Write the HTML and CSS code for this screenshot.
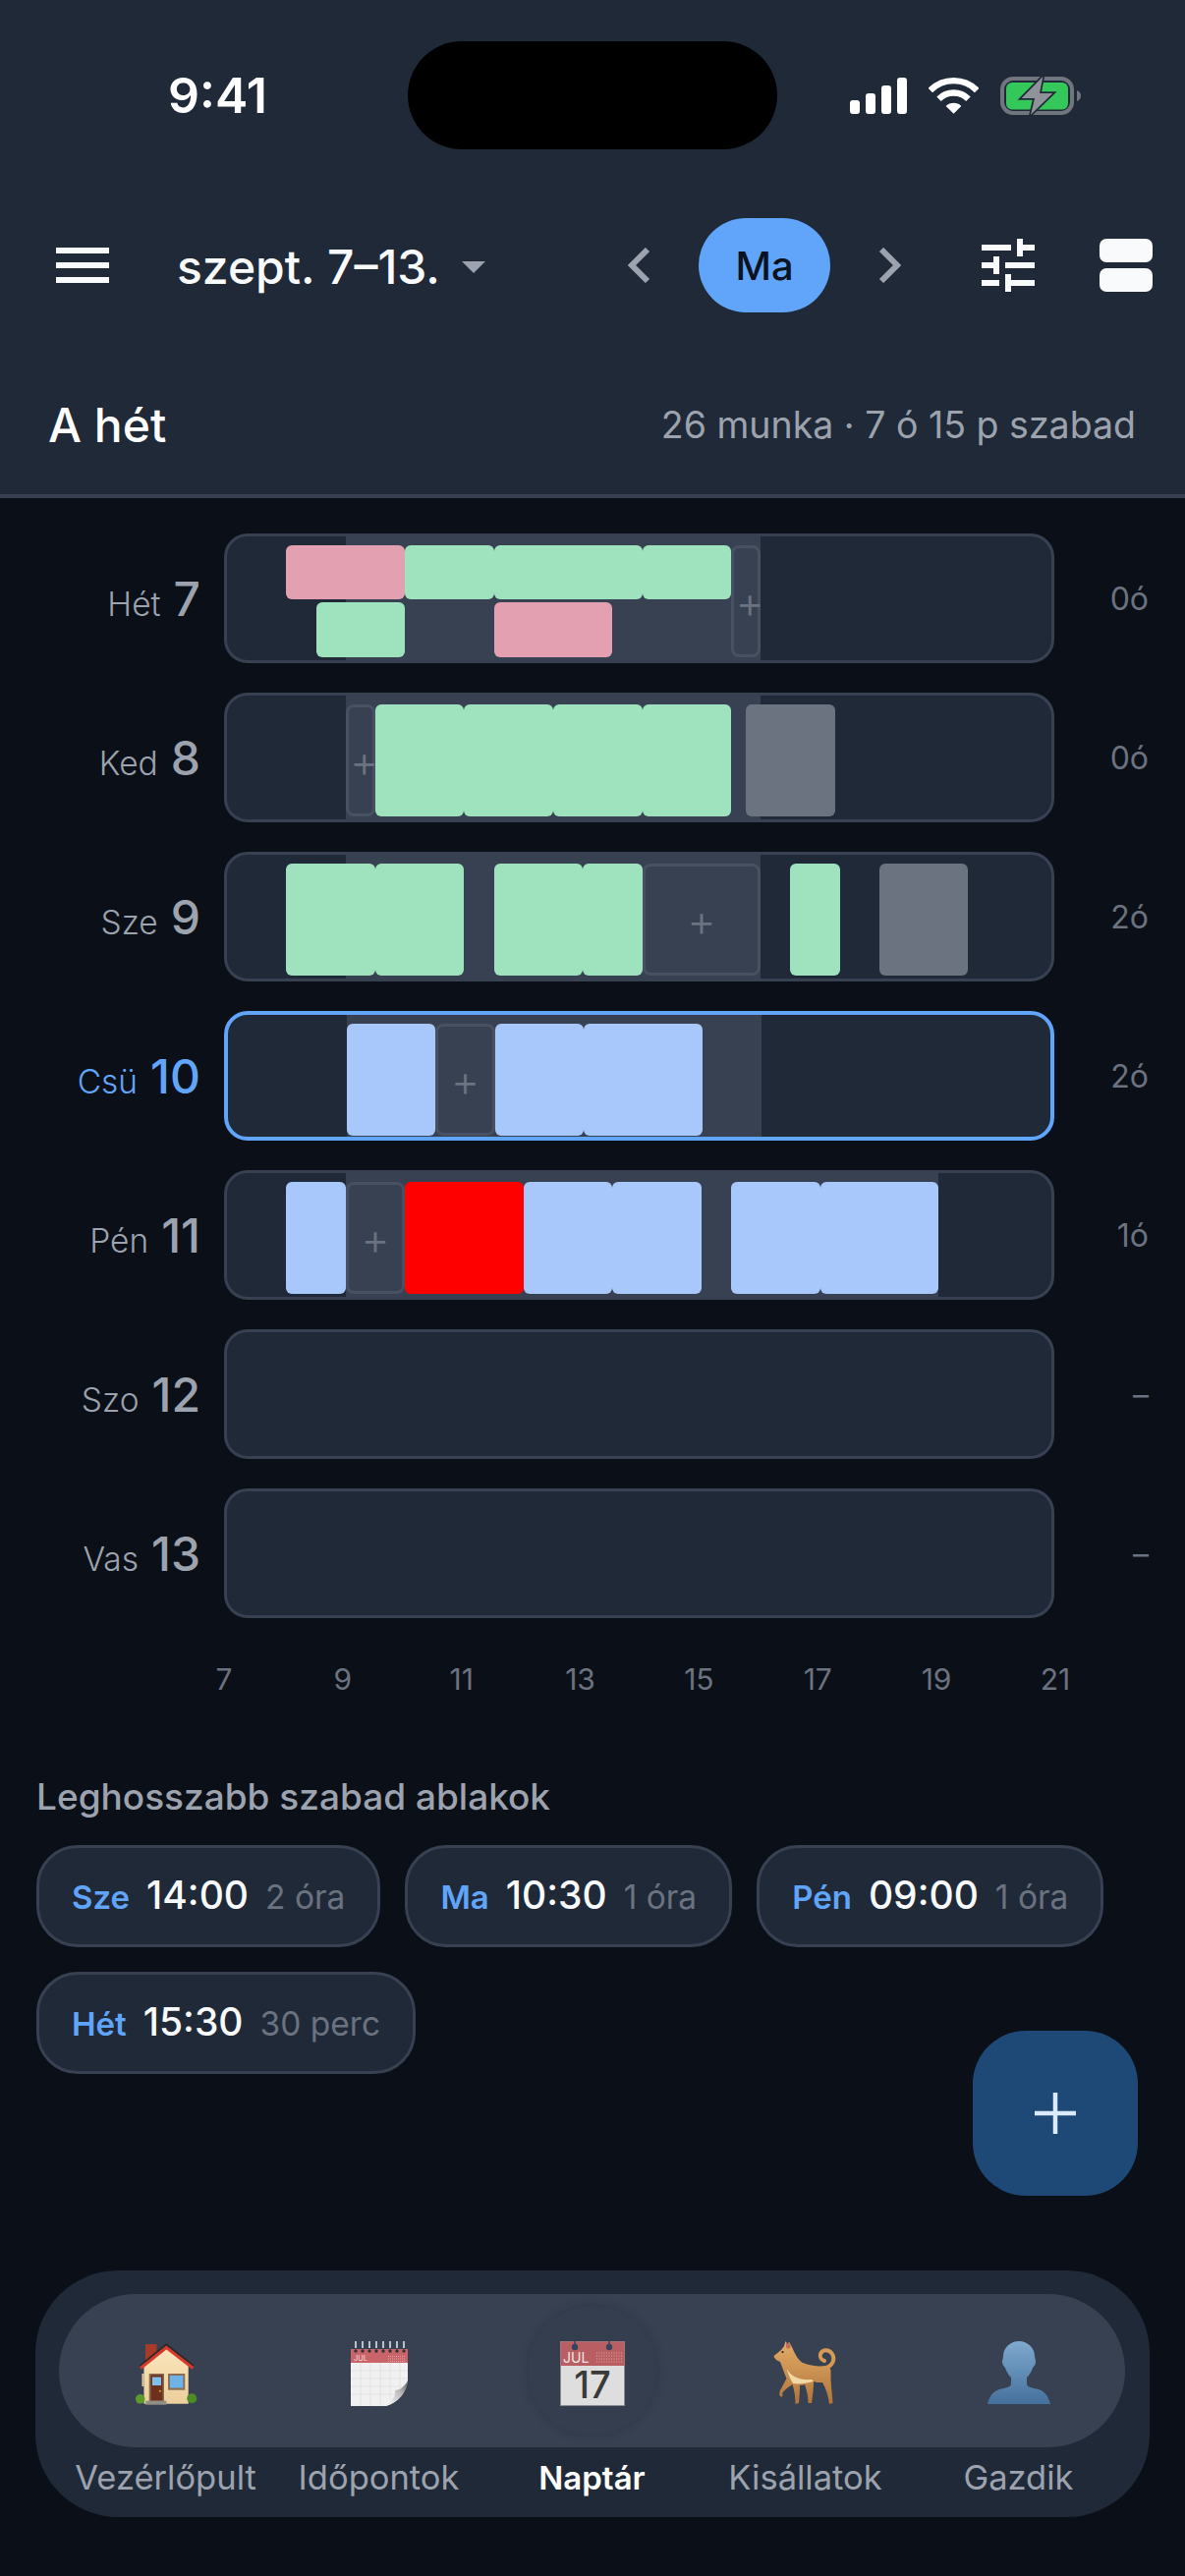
FILE: index.html
```html
<!DOCTYPE html>
<html lang="hu">
<head>
  <meta charset="UTF-8">
  <meta name="viewport" content="width=device-width, initial-scale=1.0">
  <title>Naptár</title>
  <link rel="stylesheet" href="styles.css">
</head>
<body>
  <div class="page">
    <header class="top">
      <div class="statusbar">
        <span class="clock">9:41</span>
        <span class="island"></span>
        <span class="status-icons">
          <svg width="58" height="37" viewBox="0 0 58 37" fill="#fff">
            <rect x="0" y="23" width="10" height="14" rx="3"/>
            <rect x="16" y="16" width="10" height="21" rx="3"/>
            <rect x="32" y="8" width="10" height="29" rx="3"/>
            <rect x="48" y="0" width="10" height="37" rx="3"/>
          </svg>
          <svg class="wifi" width="51" height="37" viewBox="0 0 51 37">
            <path d="M1.8 13A33.5 33.5 0 0 1 49.2 13" fill="none" stroke="#fff" stroke-width="6.3"/>
            <path d="M10.5 21.7A21.2 21.2 0 0 1 40.5 21.7" fill="none" stroke="#fff" stroke-width="6.3"/>
            <path d="M25.5 36.7L17.7 28.9A11 11 0 0 1 33.3 28.9Z" fill="#fff"/>
          </svg>
          <svg class="battery" width="82" height="39" viewBox="0 0 82 39">
            <rect x="2" y="2" width="71" height="35" rx="11" fill="none" stroke="#71767e" stroke-width="4"/>
            <rect x="6" y="6" width="63" height="27.5" rx="6" fill="#34c759"/>
            <path d="M78 14c3 1 4 3 4 5.500s-1 4.500-4 5.500z" fill="#71767e"/>
            <path d="M43.300 0L21.700 22H35L31 38.700L53.300 17H40Z" fill="#8e9299" stroke="#1f2937" stroke-width="3.500" paint-order="stroke"/>
          </svg>
        </span>
      </div>

      <div class="toolbar">
        <svg class="menu-icon" width="54" height="36" viewBox="0 0 54 36" fill="#f9fafb">
          <rect y="0" width="54" height="6"/>
          <rect y="15" width="54" height="6"/>
          <rect y="30" width="54" height="6"/>
        </svg>
        <span class="range">szept. 7–13.</span>
        <span class="caret"></span>
        <div class="toolbar-right">
          <svg width="23" height="36" viewBox="0 0 23 36"><path d="M20 2L4 18L20 34" class="chevron"/></svg>
          <span class="today-btn">Ma</span>
          <svg width="23" height="36" viewBox="0 0 23 36"><path d="M3 2L19 18L3 34" class="chevron"/></svg>
          <svg class="sliders" width="54" height="54" viewBox="0 0 54 54" fill="#f9fafb">
            <rect x="0" y="6" width="30" height="6"/>
            <rect x="36" y="0" width="6" height="18"/>
            <rect x="42" y="6" width="12" height="6"/>
            <rect x="0" y="24" width="12" height="6"/>
            <rect x="12" y="18" width="6" height="18"/>
            <rect x="24" y="24" width="30" height="6"/>
            <rect x="0" y="42" width="18" height="6"/>
            <rect x="24" y="36" width="6" height="18"/>
            <rect x="24" y="42" width="30" height="6"/>
          </svg>
          <svg class="layout-icon" width="54" height="54" viewBox="0 0 54 54" fill="#f9fafb">
            <rect width="54" height="24" rx="7"/>
            <rect y="30" width="54" height="24" rx="7"/>
          </svg>
        </div>
      </div>

      <div class="summary">
        <h1>A hét</h1>
        <span class="summary-meta">26 munka · 7 ó 15 p szabad</span>
      </div>
    </header>

    <section class="days">
      <div class="day">
        <div class="day-label"><span>Hét</span><b>7</b></div>
        <div class="track">
          <i class="band" style="--s:2;--d:7"></i>
          <i class="bar pink lane-a" style="--s:1;--d:2"></i>
          <i class="bar green lane-a" style="--s:3;--d:1.5"></i>
          <i class="bar green lane-a" style="--s:4.5;--d:2.5"></i>
          <i class="bar green lane-a" style="--s:7;--d:1.5"></i>
          <i class="bar green lane-b" style="--s:1.5;--d:1.5"></i>
          <i class="bar pink lane-b" style="--s:4.5;--d:2"></i>
          <span class="slot narrow" style="--s:8.5;--d:0.5">+</span>
        </div>
        <div class="day-total">0ó</div>
      </div>

      <div class="day">
        <div class="day-label"><span>Ked</span><b>8</b></div>
        <div class="track">
          <i class="band" style="--s:2;--d:7"></i>
          <span class="slot narrow" style="--s:2;--d:0.5">+</span>
          <i class="bar green" style="--s:2.5;--d:1.5"></i>
          <i class="bar green" style="--s:4;--d:1.5"></i>
          <i class="bar green" style="--s:5.5;--d:1.5"></i>
          <i class="bar green" style="--s:7;--d:1.5"></i>
          <i class="bar gray" style="--s:8.75;--d:1.5"></i>
        </div>
        <div class="day-total">0ó</div>
      </div>

      <div class="day">
        <div class="day-label"><span>Sze</span><b>9</b></div>
        <div class="track">
          <i class="band" style="--s:2;--d:7"></i>
          <i class="bar green" style="--s:1;--d:1.5"></i>
          <i class="bar green" style="--s:2.5;--d:1.5"></i>
          <i class="bar green" style="--s:4.5;--d:1.5"></i>
          <i class="bar green" style="--s:6;--d:1"></i>
          <span class="slot" style="--s:7;--d:2">+</span>
          <i class="bar green" style="--s:9.5;--d:0.83"></i>
          <i class="bar gray" style="--s:11;--d:1.5"></i>
        </div>
        <div class="day-total">2ó</div>
      </div>

      <div class="day is-today">
        <div class="day-label"><span>Csü</span><b>10</b></div>
        <div class="track">
          <i class="band" style="--s:2;--d:7"></i>
          <i class="bar blue" style="--s:2;--d:1.5"></i>
          <span class="slot" style="--s:3.5;--d:1">+</span>
          <i class="bar blue" style="--s:4.5;--d:1.5"></i>
          <i class="bar blue" style="--s:6;--d:2"></i>
        </div>
        <div class="day-total">2ó</div>
      </div>

      <div class="day">
        <div class="day-label"><span>Pén</span><b>11</b></div>
        <div class="track">
          <i class="band" style="--s:2;--d:10"></i>
          <i class="bar blue" style="--s:1;--d:1"></i>
          <span class="slot" style="--s:2;--d:1">+</span>
          <i class="bar red" style="--s:3;--d:2"></i>
          <i class="bar blue" style="--s:5;--d:1.5"></i>
          <i class="bar blue" style="--s:6.5;--d:1.5"></i>
          <i class="bar blue" style="--s:8.5;--d:1.5"></i>
          <i class="bar blue" style="--s:10;--d:2"></i>
        </div>
        <div class="day-total">1ó</div>
      </div>

      <div class="day">
        <div class="day-label"><span>Szo</span><b>12</b></div>
        <div class="track"></div>
        <div class="day-total">–</div>
      </div>

      <div class="day">
        <div class="day-label"><span>Vas</span><b>13</b></div>
        <div class="track"></div>
        <div class="day-total">–</div>
      </div>
    </section>

    <div class="axis">
      <span>7</span><span>9</span><span>11</span><span>13</span><span>15</span><span>17</span><span>19</span><span>21</span>
    </div>

    <section class="windows">
      <h2>Leghosszabb szabad ablakok</h2>
      <div class="pills">
        <div class="pill"><span class="pill-day">Sze</span><span class="pill-time">14:00</span><span class="pill-len">2 óra</span></div>
        <div class="pill"><span class="pill-day">Ma</span><span class="pill-time">10:30</span><span class="pill-len">1 óra</span></div>
        <div class="pill"><span class="pill-day">Pén</span><span class="pill-time">09:00</span><span class="pill-len">1 óra</span></div>
        <div class="pill"><span class="pill-day">Hét</span><span class="pill-time">15:30</span><span class="pill-len">30 perc</span></div>
      </div>
    </section>

    <button class="fab" aria-label="Új">
      <svg width="42" height="42" viewBox="0 0 42 42"><path d="M21 0V42M0 21H42" stroke="#dbeafe" stroke-width="4.500"/></svg>
    </button>

    <nav class="tabbar">
      <div class="tab-icons">
        <div class="tab-icon">
          <svg width="66" height="66" viewBox="0 0 66 66">
            <defs>
              <linearGradient id="wall" x1="0" y1="0" x2="0" y2="1"><stop offset="0" stop-color="#fbe6bd"/><stop offset="1" stop-color="#eccf9c"/></linearGradient>
            </defs>
            <rect x="12" y="3" width="11.500" height="16" fill="#a83a2a"/>
            <path d="M10.500 24L33.300 6L55.700 24V63.700H10.500Z" fill="url(#wall)"/>
            <rect x="8.500" y="33" width="2" height="13" fill="#e6cc9b"/>
            <path d="M7 26L33.300 4.500L60.500 26" fill="none" stroke="#2a2a2a" stroke-width="4"/>
            <path d="M7 27.500L33.300 6.500L60.500 27.500" fill="none" stroke="#d93a2b" stroke-width="3"/>
            <rect x="15.700" y="33" width="15.300" height="28" fill="#8a6a4f"/>
            <rect x="17.500" y="34.500" width="12" height="26" fill="#6d2f1e"/>
            <rect x="19" y="36.500" width="9" height="8.500" fill="#7ec0ea"/>
            <circle cx="26.800" cy="50.800" r="1" fill="#e5a92b"/>
            <rect x="35" y="33" width="17.300" height="16.700" fill="#8a6f55"/>
            <rect x="37" y="35" width="13.300" height="12.500" fill="#6db3e8"/>
            <rect x="12.300" y="60.700" width="21" height="4" fill="#8f8f86"/>
            <circle cx="6.700" cy="58.800" r="4.800" fill="#5c9a2e"/>
            <circle cx="59.300" cy="58.300" r="5" fill="#4f8a28"/>
          </svg>
        </div>
        <div class="tab-icon">
          <svg width="66" height="66" viewBox="0 0 66 66">
            <defs>
              <linearGradient id="curl" x1="0" y1="1" x2="1" y2="0"><stop offset="0" stop-color="#fff"/><stop offset="0.6" stop-color="#b9b9b9"/><stop offset="1" stop-color="#5b5b5b"/></linearGradient>
            </defs>
            <rect x="4" y="8" width="58" height="14" fill="#c9656a"/>
            <path d="M4 22H62V40C60 52 52 62 40 66H4Z" fill="#f1f1f1"/>
            <path d="M4 30H62M4 38H62M4 46H58M4 54H50M14 22V66M24 22V66M34 22V66M44 22V60M54 22V50" stroke="#e2e2e2" stroke-width="1"/>
            <path d="M62 40C61 52 53 62 40 66C47 60 50 55 49 50C54 50 59 46 62 40Z" fill="url(#curl)"/>
            <g class="rings">
              <rect x="8" y="0" width="2" height="7"/><rect x="15" y="0" width="2" height="7"/><rect x="22" y="0" width="2" height="7"/><rect x="29" y="0" width="2" height="7"/><rect x="36" y="0" width="2" height="7"/><rect x="43" y="0" width="2" height="7"/><rect x="50" y="0" width="2" height="7"/><rect x="57" y="0" width="2" height="7"/>
            </g>
            <g fill="#333">
              <circle cx="9" cy="10" r="1.700"/><circle cx="16" cy="10" r="1.700"/><circle cx="23" cy="10" r="1.700"/><circle cx="30" cy="10" r="1.700"/><circle cx="37" cy="10" r="1.700"/><circle cx="44" cy="10" r="1.700"/><circle cx="51" cy="10" r="1.700"/><circle cx="58" cy="10" r="1.700"/>
            </g>
            <text x="7" y="20" class="cal-small">JUL</text>
            <path d="M42 15.500H59M42 18H59M42 20.500H59" stroke="#e3a4a6" stroke-width="1" stroke-dasharray="1 1"/>
          </svg>
        </div>
        <div class="tab-icon is-active">
          <svg width="66" height="66" viewBox="0 0 66 66">
            <rect x="0.500" y="0.500" width="65" height="65" fill="#dedede" stroke="#8e8e90"/>
            <rect x="0.500" y="0.500" width="65" height="24.500" fill="#b95f63"/>
            <path d="M15 0V6M50 0V6" stroke="#33455c" stroke-width="1.500"/>
            <circle cx="15" cy="6" r="3.200" fill="#33455c"/>
            <circle cx="50" cy="6" r="3.200" fill="#33455c"/>
            <text x="3" y="21.500" class="cal-month">JUL</text>
            <path d="M37 12H63M37 15H63M37 18H63M37 21H63" stroke="#e3a4a6" stroke-width="1" stroke-dasharray="1 1.500"/>
            <text x="33" y="58" class="cal-day">17</text>
          </svg>
        </div>
        <div class="tab-icon">
          <svg width="66" height="66" viewBox="0 0 66 66">
            <defs>
              <linearGradient id="fur" x1="0" y1="0" x2="0" y2="1"><stop offset="0" stop-color="#e3ad67"/><stop offset="1" stop-color="#b0733a"/></linearGradient>
            </defs>
            <path d="M54 27C61 24 63 18 60 13C57 8 50 8 48 13C47 16 49 19 52 20" fill="none" stroke="#d69a55" stroke-width="4" stroke-linecap="round"/>
            <path d="M0.500 15L8 9L11 5L12.500 0L15 3.500L16 0.500L19 6C22 13 25 19 30 22C38 25 46 26 53 25C57 24 59 28 58.500 33C58 42 60 52 60.500 63L57 64C56 56 54 49 50 42C46 42 43 42 41 41C41 48 40 56 39 63L35.500 63C35.500 56 34 50 32 44C30 45 28 45 27 44.500C27 51 26.500 57 26 63L22.500 64C22.500 57 21.500 50 19.500 44C15 47 11 50 9 53C10 55 9.500 57 8 56.500C6 56 6 53 7 50C9 46 11.500 42 13.500 38C11 32 9 26 7 21C4 20 1 18 0.500 15Z" fill="url(#fur)"/>
            <path d="M13.500 28C18 36 27 40 39 39L41 41C33 43 26 44 20 43C17 38 15 33 13.500 28Z" fill="#f1d6a6"/>
            <path d="M13 0.500L15 4L16 1L18 6L15 8L13 6Z" fill="#c2695c"/>
            <circle cx="9.500" cy="11" r="1.100" fill="#2b1c10"/>
          </svg>
        </div>
        <div class="tab-icon">
          <svg width="66" height="66" viewBox="0 0 66 66">
            <defs>
              <linearGradient id="bust" x1="0" y1="0" x2="0" y2="1"><stop offset="0" stop-color="#7fa9cd"/><stop offset="1" stop-color="#44709c"/></linearGradient>
            </defs>
            <path d="M33 0C24 0 17 7 17 15C17 17 16 19 16 21C16 24 18 26 19 27C20 31 23 35 25 37L25 43C25 46 22 47 18 48C10 49 4 52 1 64L65 64C62 52 56 49 48 48C44 47 41 46 41 43L41 37C43 35 46 31 47 27C48 26 50 24 50 21C50 19 49 17 49 15C49 7 42 0 33 0Z" fill="url(#bust)"/>
          </svg>
        </div>
      </div>
      <div class="tab-labels">
        <span>Vezérlőpult</span>
        <span>Időpontok</span>
        <span class="is-active">Naptár</span>
        <span>Kisállatok</span>
        <span>Gazdik</span>
      </div>
    </nav>
  </div>
</body>
</html>
```
FILE: styles.css
```css
* {
  box-sizing: border-box;
}
html, body {
  margin: 0;
  background-color: #0b0f17;
}
body {
  color: #f9fafb;
  font-family: Inter, "Noto Sans", sans-serif;
}
.page {
  position: relative;
  display: flex;
  flex-direction: column;
  width: 1206px;
  height: 2622px;
  overflow: hidden;
}

/* header */
.top {
  background-color: #1f2937;
  border-bottom: 4px solid #374151;
}
.statusbar {
  display: flex;
  align-items: center;
  height: 194px;
  padding-left: 171px;
}
.clock {
  width: 244px;
  font-size: 50px;
  font-weight: 600;
  color: #fff;
}
.island {
  width: 376px;
  height: 110px;
  border-radius: 55px;
  background-color: #000;
}
.status-icons {
  display: flex;
  align-items: center;
  margin-left: 74px;
  gap: 22px;
}
.toolbar {
  display: flex;
  align-items: center;
  height: 152px;
  padding: 0 33px 0 57px;
}
.range {
  margin-left: 69px;
  padding-top: 3px;
  font-size: 48px;
  font-weight: 500;
}
.caret {
  margin-left: 22px;
  margin-top: 3px;
  border-left: 12px solid transparent;
  border-right: 12px solid transparent;
  border-top: 12px solid #9ca3af;
}
.toolbar-right {
  display: flex;
  align-items: center;
  margin-left: auto;
}
.chevron {
  fill: none;
  stroke: #9ca3af;
  stroke-width: 6;
}
.today-btn {
  display: flex;
  align-items: center;
  justify-content: center;
  width: 134px;
  height: 96px;
  margin: 0 49px;
  border-radius: 48px;
  background-color: #60a5fa;
  color: #0b1220;
  font-size: 40px;
  font-weight: 500;
}
.sliders {
  margin-left: 82px;
}
.layout-icon {
  margin-left: 66px;
}
.summary {
  display: flex;
  justify-content: space-between;
  align-items: center;
  height: 157px;
  padding: 16px 50px 0 49px;
}
.summary h1 {
  margin: 0;
  font-size: 48px;
  font-weight: 500;
  color: #fff;
}
.summary-meta {
  font-size: 37.5px;
  color: #9ca3af;
}

/* week rows */
.days {
  display: flex;
  flex-direction: column;
  gap: 30px;
  padding-top: 36px;
}
.day {
  display: grid;
  grid-template-columns: 204px 845px 72px;
  column-gap: 24px;
  align-items: center;
}
.day-label {
  display: flex;
  justify-content: flex-end;
  align-items: baseline;
  gap: 13px;
  color: #9ca3af;
  font-size: 33.5px;
  font-weight: 300;
}
.day-label b {
  font-size: 48px;
  font-weight: 500;
}
.day-total {
  text-align: right;
  color: #6b7280;
  font-size: 32px;
}
.track {
  position: relative;
  height: 132px;
  border: 3px solid #374151;
  border-radius: 24px;
  background-color: #1f2937;
  overflow: hidden;
}
.is-today .track {
  border: 4.5px solid #60a5fa;
}
.is-today .day-label {
  color: #60a5fa;
}
/* --s start and --d length, in hours from 7:00 */
.band, .bar, .slot {
  position: absolute;
  left: calc(var(--s) * 60.36px);
  width: calc(var(--d) * 60.36px);
}
.band {
  top: 0;
  bottom: 0;
  background-color: #374151;
}
.bar {
  top: 9px;
  height: 114px;
  border-radius: 6px;
}
.bar.lane-a {
  height: 55px;
}
.bar.lane-b {
  top: 67px;
  height: 56px;
}
.green {
  background-color: #9fe3be;
}
.pink {
  background-color: #e2a0b0;
}
.blue {
  background-color: #a8c7fa;
}
.gray {
  background-color: #6b7280;
}
.red {
  background-color: #f00;
}
.slot {
  top: 9px;
  height: 114px;
  display: flex;
  align-items: center;
  justify-content: center;
  border: 3px solid #475161;
  border-radius: 8px;
  background-color: #374151;
  color: #6b7280;
  font-size: 45px;
  font-weight: 300;
  line-height: 1;
}
.slot.narrow {
  padding-left: 8px;
}

.axis {
  display: flex;
  justify-content: space-between;
  width: 846px;
  margin: 44px 0 0 228px;
  color: #6b7280;
  font-size: 30px;
  line-height: 36px;
}
.axis span {
  display: flex;
  justify-content: center;
  width: 0;
}

/* free windows */
.windows {
  margin-top: 80px;
  padding: 0 37px;
}
.windows h2 {
  margin: 0 0 27px;
  color: #9ca3af;
  font-size: 37px;
  font-weight: 500;
  line-height: 44px;
}
.pills {
  display: flex;
  flex-wrap: wrap;
  gap: 25px;
}
.pill {
  display: flex;
  align-items: baseline;
  gap: 17px;
  height: 104px;
  padding: 24px 33px 0 33px;
  border: 3px solid #374151;
  border-radius: 42px;
  background-color: #1f2937;
}
.pill-day {
  color: #60a5fa;
  font-size: 33px;
  font-weight: 600;
}
.pill-time {
  color: #f9fafb;
  font-size: 39px;
  font-weight: 500;
}
.pill-len {
  color: #6b7280;
  font-size: 33.5px;
}

.fab {
  position: absolute;
  top: 2067px;
  right: 48px;
  display: flex;
  align-items: center;
  justify-content: center;
  width: 168px;
  height: 168px;
  padding: 0;
  border: none;
  border-radius: 54px;
  background-color: #1e4976;
}

/* bottom tabs */
.tabbar {
  margin: auto 36px 60px;
  padding: 24px 25px 20px 24px;
  border-radius: 84px;
  background-color: #1f2937;
}
.tab-icons {
  display: grid;
  grid-template-columns: repeat(5, 1fr);
  align-items: center;
  height: 156px;
  border-radius: 78px;
  background-color: #374151;
}
.tab-icon {
  display: flex;
  align-items: center;
  justify-content: center;
  justify-self: center;
  width: 132px;
  height: 132px;
  padding-top: 6px;
  border-radius: 50%;
}
.tab-icon.is-active {
  background-color: #343e4f;
  box-shadow: 0 0 10px rgba(31, 41, 55, 0.35);
}
.tab-icon svg {
  display: block;
}
.rings rect {
  fill: #b8c2cc;
}
.cal-small {
  font-size: 7.500px;
  fill: #f6dcdc;
}
.cal-month {
  font-size: 14px;
  fill: #f4e6e6;
}
.cal-day {
  font-size: 38px;
  font-weight: 500;
  fill: #3a3a3a;
  text-anchor: middle;
}
.tab-labels {
  display: grid;
  grid-template-columns: repeat(5, 1fr);
  margin-top: 11px;
  color: #9ca3af;
  font-size: 34.5px;
  line-height: 40px;
  text-align: center;
}
.tab-labels .is-active {
  color: #fff;
  font-size: 33px;
  font-weight: 600;
}
```
